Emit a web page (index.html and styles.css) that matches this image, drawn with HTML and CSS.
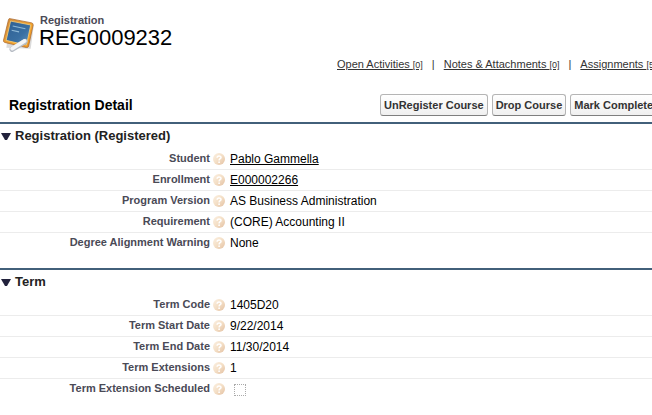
FILE: index.html
```html
<!DOCTYPE html>
<html lang="en">
<head>
<meta charset="utf-8">
<title>Registration REG0009232</title>
<link rel="stylesheet" href="styles.css">
</head>
<body>
<svg class="defs" width="0" height="0" aria-hidden="true">
  <defs>
    <linearGradient id="orb" x1="0" y1="0" x2="1" y2="1">
      <stop offset="0" stop-color="#fbf0e2"/>
      <stop offset=".5" stop-color="#f4dfc6"/>
      <stop offset="1" stop-color="#e3c0a2"/>
    </linearGradient>
    <symbol id="help" viewBox="0 0 12 12">
      <circle cx="6" cy="6" r="6" fill="url(#orb)"/>
      <path d="M4.1 4.7C4.1 2.5 8 2.4 8 4.5 8 5.8 6.1 5.7 6.1 7.4" fill="none" stroke="#fff" stroke-width="1.5"/>
      <circle cx="6.1" cy="9.2" r=".9" fill="#fff"/>
    </symbol>
  </defs>
</svg>
<header class="page-head">
  <svg class="page-icon" viewBox="0 0 34 34" aria-hidden="true">
    <defs>
      <linearGradient id="board" x1="0" y1="0" x2="1" y2="1">
        <stop offset="0" stop-color="#2d5f93"/>
        <stop offset=".6" stop-color="#3a6fa2"/>
        <stop offset="1" stop-color="#5e96c4"/>
      </linearGradient>
      <linearGradient id="frame" x1="0" y1="0" x2="1" y2="1">
        <stop offset="0" stop-color="#d08a3c"/>
        <stop offset=".6" stop-color="#f3a52f"/>
        <stop offset="1" stop-color="#e88d20"/>
      </linearGradient>
    </defs>
    <path d="M9 4 32 8.500 29 31 6 30Z" fill="#000" opacity=".14"/>
    <path d="M9.500 2.500 30 6.500Q31.500 7 31.300 8.500L27 28.500Q26.500 30 25 29.800L4.500 25Q3 24.500 3.300 23L8 3.500Q8.300 2.300 9.500 2.500Z" fill="url(#frame)" stroke="#a8672e" stroke-width=".7"/>
    <path d="M10 4.800 29 8.500 25 27.500 5.800 23Z" fill="url(#board)" stroke="#ffd680" stroke-width=".7"/>
    <path d="M12 9.500 24 12M11 13.500 18 15" fill="none" stroke="#8fb9d6" stroke-width="1"/>
    <path d="M11.500 31.500 23.500 24" stroke="#b9bec6" stroke-width="5" stroke-linecap="round"/>
    <path d="M11.500 30.800 23.300 23.500" stroke="#f4f5f7" stroke-width="3.600" stroke-linecap="round"/>
  </svg>
  <div>
    <p class="page-type">Registration</p>
    <h1 class="page-name">REG0009232</h1>
  </div>
</header>

<nav class="related">
  <a href="#activities">Open Activities <small>[0]</small></a>
  <span>|</span>
  <a href="#notes">Notes &amp; Attachments <small>[0]</small></a>
  <span>|</span>
  <a href="#assignments">Assignments <small>[5]</small></a>
</nav>

<main>
  <div class="detail-head">
    <h2>Registration Detail</h2>
    <div class="actions">
      <button type="button">UnRegister Course</button>
      <button type="button">Drop Course</button>
      <button type="button">Mark Complete</button>
    </div>
  </div>

  <section class="block">
    <h3><svg class="twist" viewBox="0 0 10 7" aria-hidden="true"><path d="M0 0H10L6 7H4Z" fill="#22223c"/></svg>Registration (Registered)</h3>
    <dl>
      <div class="row"><dt>Student</dt><dd><svg class="help"><use href="#help"/></svg><a href="#student">Pablo Gammella</a></dd></div>
      <div class="row"><dt>Enrollment</dt><dd><svg class="help"><use href="#help"/></svg><a href="#enrollment">E000002266</a></dd></div>
      <div class="row"><dt>Program Version</dt><dd><svg class="help"><use href="#help"/></svg>AS Business Administration</dd></div>
      <div class="row"><dt>Requirement</dt><dd><svg class="help"><use href="#help"/></svg>(CORE) Accounting II</dd></div>
      <div class="row"><dt>Degree Alignment Warning</dt><dd><svg class="help"><use href="#help"/></svg>None</dd></div>
    </dl>
  </section>

  <section class="block">
    <h3><svg class="twist" viewBox="0 0 10 7" aria-hidden="true"><path d="M0 0H10L6 7H4Z" fill="#22223c"/></svg>Term</h3>
    <dl>
      <div class="row"><dt>Term Code</dt><dd><svg class="help"><use href="#help"/></svg>1405D20</dd></div>
      <div class="row"><dt>Term Start Date</dt><dd><svg class="help"><use href="#help"/></svg>9/22/2014</dd></div>
      <div class="row"><dt>Term End Date</dt><dd><svg class="help"><use href="#help"/></svg>11/30/2014</dd></div>
      <div class="row"><dt>Term Extensions</dt><dd><svg class="help"><use href="#help"/></svg>1</dd></div>
      <div class="row"><dt><label for="scheduled">Term Extension Scheduled</label></dt><dd><svg class="help"><use href="#help"/></svg><input type="checkbox" id="scheduled" disabled></dd></div>
    </dl>
  </section>
</main>
</body>
</html>
```
FILE: styles.css
```css
* {
  box-sizing: border-box;
}

body {
  margin: 0;
  overflow: hidden;
  background: #fff;
  color: #000;
  font: 12px/20px "Liberation Sans", Arial, sans-serif;
}

h1, h2, h3, p, dl, dd {
  margin: 0;
}

.defs {
  position: absolute;
}

.page-head {
  display: flex;
  gap: 3px;
  padding-top: 14px;
}

.page-icon {
  width: 36px;
  height: 36px;
  margin-top: 2px;
}

.page-type {
  padding-left: 1px;
  color: #4a4a56;
  font-size: 11px;
  font-weight: bold;
  line-height: 12px;
}

.page-name {
  font-size: 22px;
  font-weight: normal;
  line-height: 24px;
}

.related {
  display: flex;
  gap: 9px;
  padding: 2px 0 0 337px;
  color: #333;
  font-size: 11px;
  white-space: nowrap;
}

.related a {
  color: #333;
}

.related small {
  font-size: 9px;
}

.detail-head {
  display: flex;
  align-items: center;
  padding: 19px 0 6px 9px;
}

.detail-head h2 {
  flex: 0 0 371px;
  font-size: 14px;
}

.actions {
  display: flex;
  gap: 4px;
}

.actions button {
  height: 22px;
  padding: 0 3px;
  border: 1px solid #b5b5b5;
  border-bottom-color: #7f7f7f;
  border-radius: 3px;
  background: linear-gradient(#fff, #f0f0f0);
  color: #333;
  font: bold 11px "Liberation Sans", Arial, sans-serif;
  white-space: nowrap;
}

.block {
  padding-bottom: 15px;
  border-top: 2px solid #42607a;
}

.block h3 {
  display: flex;
  align-items: center;
  gap: 4px;
  padding-left: 1px;
  margin-bottom: 1px;
  color: #222;
  font-size: 13px;
  line-height: 24px;
}

.twist {
  width: 10px;
  height: 7px;
}

.row {
  display: flex;
  border-bottom: 1px solid #ececec;
}

.row:last-child {
  border-bottom: 0;
}

.row dt {
  flex: 0 0 210px;
  color: #4a4a56;
  font-size: 11px;
  font-weight: bold;
  line-height: 18px;
  text-align: right;
}

.row dd {
  display: flex;
  align-items: center;
  gap: 5px;
  padding-left: 3px;
}

.row a {
  color: #000;
}

.help {
  width: 12px;
  height: 12px;
}

.row input {
  appearance: none;
  width: 12px;
  height: 12px;
  margin: 5px 4px 3px;
  border: 1px dotted #aaa;
}
```
